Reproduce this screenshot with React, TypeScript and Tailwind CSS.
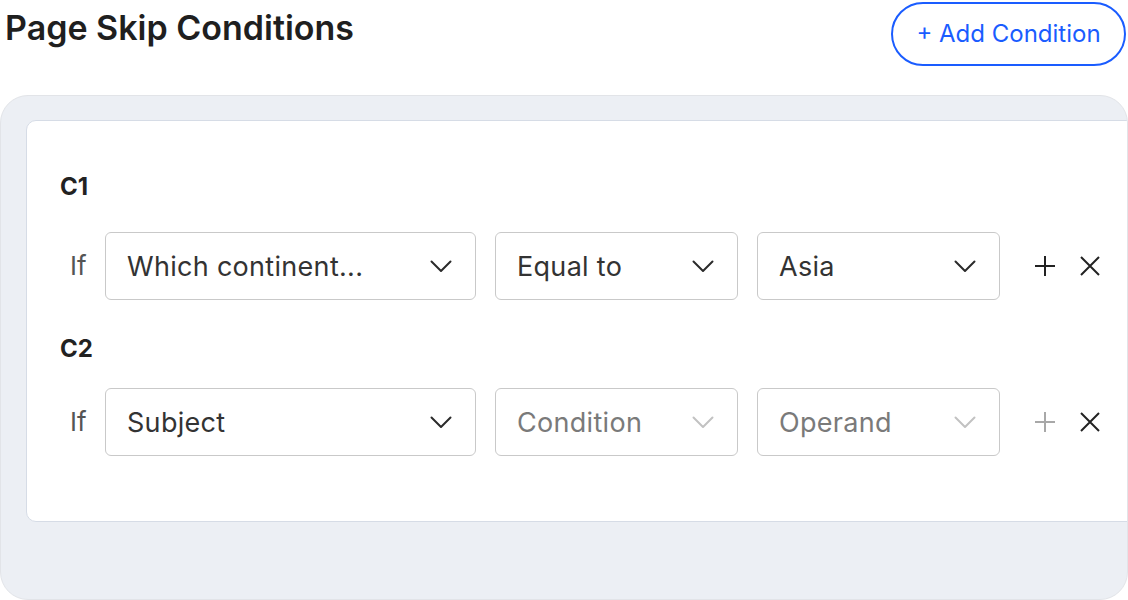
import React from "react";

const font = { fontFamily: "Inter, 'Noto Sans', sans-serif" };

function Chevron({ light }: { light?: boolean }) {
  return (
    <svg width="22" height="13" viewBox="0 0 22 13" fill="none" className="shrink-0">
      <path
        d="M1.5 1.5 L11 11 L20.5 1.5"
        stroke={light ? "#c2c2c2" : "#2b2b2b"}
        strokeWidth="2"
        strokeLinecap="round"
        strokeLinejoin="round"
      />
    </svg>
  );
}

function Select({ text, placeholder, width }: { text: string; placeholder?: boolean; width: string }) {
  return (
    <div
      className={`${width} h-[68px] flex items-center justify-between pl-[21px] pr-[23px] bg-white border-[1.5px] border-[#c9c9c9] rounded-[6px]`}
    >
      <span
        className={`text-[27px] tracking-[0.3px] leading-none ${placeholder ? "text-[#7a7a7a]" : "text-[#333333]"}`}
      >
        {text}
      </span>
      <Chevron light={placeholder} />
    </div>
  );
}

function PlusIcon({ light }: { light?: boolean }) {
  return (
    <svg width="22" height="22" viewBox="0 0 22 22" fill="none">
      <path d="M11 1 V21 M1 11 H21" stroke={light ? "#a8a8a8" : "#222222"} strokeWidth="2" />
    </svg>
  );
}

function XIcon() {
  return (
    <svg width="20" height="20" viewBox="0 0 20 20" fill="none">
      <path d="M1 1 L19 19 M19 1 L1 19" stroke="#222222" strokeWidth="2" />
    </svg>
  );
}

function Row({
  a,
  b,
  c,
  bPh,
  cPh,
  lightPlus,
}: {
  a: string;
  b: string;
  c: string;
  bPh?: boolean;
  cPh?: boolean;
  lightPlus?: boolean;
}) {
  return (
    <div className="flex items-center">
      <span className="w-[78px] pl-[43px] text-[26px] leading-none text-[#555555]">If</span>
      <Select text={a} width="w-[371px]" />
      <div className="w-[19px]" />
      <Select text={b} placeholder={bPh} width="w-[243px]" />
      <div className="w-[19px]" />
      <Select text={c} placeholder={cPh} width="w-[243px]" />
      <div className="ml-[34px] flex items-center gap-[24px]">
        <PlusIcon light={lightPlus} />
        <XIcon />
      </div>
    </div>
  );
}

export default function App() {
  return (
    <div className="w-[1128px] h-[600px] bg-white overflow-hidden" style={font}>
      <div className="flex items-start justify-between pl-[5px] pr-[2px] pt-[2px]">
        <h1 className="mt-[6px] text-[34px] leading-[40px] font-semibold tracking-[0px] text-[#1f1f1f]">
          Page Skip Conditions
        </h1>
        <button className="w-[235px] h-[64px] rounded-full border-2 border-[#1a5cff] text-[#1a5cff] text-[24px] leading-none bg-white">
          + Add Condition
        </button>
      </div>
      <div className="mt-[29px] h-[505px] w-[1128px] bg-[#eceff4] border-[1.5px] border-[#e2e4e8] rounded-[28px] pl-[25px] pt-[24px] overflow-hidden">
        <div className="w-[1130px] h-[402px] bg-white border-[1.5px] border-[#d6dce6] rounded-[10px] pt-[52px]">
          <div className="pl-[33px] text-[24px] leading-[28px] font-bold text-[#222222]">C1</div>
          <div className="mt-[31px]">
            <Row a="Which continent..." b="Equal to" c="Asia" />
          </div>
          <div className="mt-[35px] pl-[33px] text-[24px] leading-[28px] font-bold text-[#222222]">C2</div>
          <div className="mt-[25px]">
            <Row a="Subject" b="Condition" c="Operand" bPh cPh lightPlus />
          </div>
        </div>
      </div>
    </div>
  );
}
